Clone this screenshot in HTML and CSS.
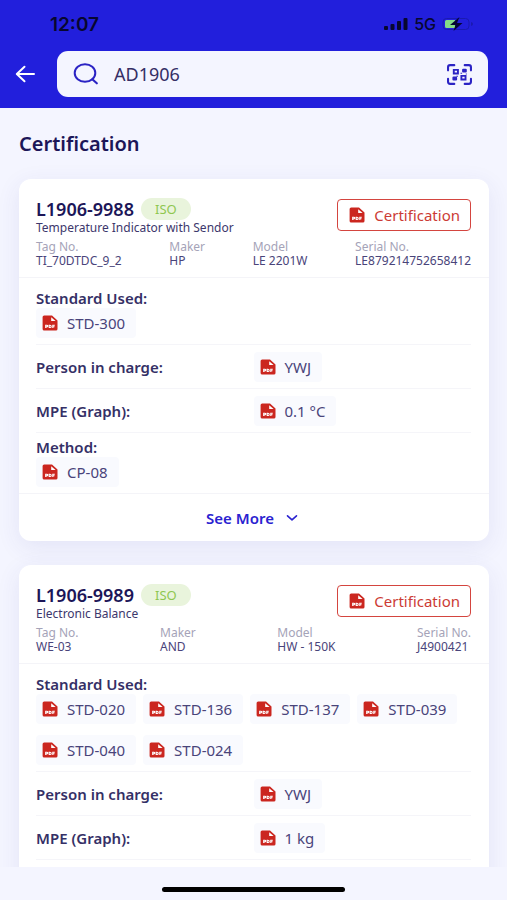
FILE: index.html
```html
<!DOCTYPE html>
<html lang="en">
<head>
<meta charset="utf-8">
<meta name="viewport" content="width=device-width, initial-scale=1">
<title>Certification</title>
<link rel="stylesheet" href="styles.css">
</head>
<body>
<svg class="sprite" aria-hidden="true">
  <symbol id="pdf" viewBox="0 0 16 16">
    <path fill="#cb261f" d="M2.2 0.4H10L15.5 5.6V14a1.6 1.6 0 0 1-1.6 1.6H2.2A1.6 1.6 0 0 1 .6 14V2A1.6 1.6 0 0 1 2.2.4z"/>
    <path fill="#fff" d="M9.2 2.2V6h4.4z"/>
    <path fill="none" stroke="#fff" stroke-width="1.1" d="M3.7 13v-2.7h1.1q1 0 1 .8t-1 .8H3.7M7.2 10.300v2.200h.7q1.300 0 1.300-1.100t-1.300-1.100zM10.800 13v-2.700h2M10.800 11.700h1.700"/>
  </symbol>
</svg>

<header class="top">
  <div class="status">
    <span class="time">12:07</span>
    <div class="signals">
      <svg class="bars" viewBox="0 0 24 12" aria-hidden="true"><rect x="0" y="8" width="4" height="4" rx="1"/><rect x="6.500" y="6" width="4" height="6" rx="1"/><rect x="13" y="3" width="4" height="9" rx="1"/><rect x="19.500" y="0" width="4" height="12" rx="1"/></svg>
      <span class="network">5G</span>
      <svg class="battery" viewBox="0 0 32 14" aria-hidden="true">
        <rect x="1" y="1.500" width="26" height="11" rx="3.500" fill="none" stroke="#1a1ab0"/>
        <path d="M29 5v4q2-.5 2-2t-2-2z" fill="#1a1ab0"/>
        <path d="M4.500 3H13v8H4.500A1.500 1.500 0 0 1 3 9.500v-5A1.500 1.500 0 0 1 4.500 3z" fill="#84dc86"/>
        <path d="M17.500 0 8 8h5.500L11.500 14 20.500 6H15z" fill="#050533"/>
      </svg>
    </div>
  </div>
  <div class="searchbar">
    <button class="back" type="button" aria-label="Back">
      <svg viewBox="0 0 20 18" aria-hidden="true"><path d="M19 9H2M9.500 1.800 1.800 9l7.700 7.200" fill="none" stroke="#fff" stroke-width="2" stroke-linecap="round" stroke-linejoin="round"/></svg>
    </button>
    <div class="field">
      <svg class="lens" viewBox="0 0 26 22" aria-hidden="true"><ellipse cx="12" cy="10" rx="10.300" ry="8.800" fill="none" stroke="#2b23c4" stroke-width="2"/><path d="m19.300 16.300 4.500 4" stroke="#2b23c4" stroke-width="2.200" stroke-linecap="round"/></svg>
      <input type="text" value="AD1906" aria-label="Search">
      <button class="scan" type="button" aria-label="Scan code">
        <svg viewBox="0 0 24 20" aria-hidden="true">
          <path d="M1 6V3q0-2 2-2h4M17 1h4q2 0 2 2v3M23 14v3q0 2-2 2h-4M7 19H3q-2 0-2-2v-3" fill="none" stroke="#2b23c4" stroke-width="2" stroke-linecap="round"/>
          <path d="M6.500 5.500h4v3.500h-4zM13.800 11.300h4v3.500h-4z" fill="none" stroke="#2b23c4" stroke-width="1.800"/>
          <rect x="14.500" y="4.500" width="4.500" height="3.500" rx="1" fill="#2b23c4"/><rect x="5.200" y="12" width="4.500" height="3.800" rx="1" fill="#2b23c4"/>
          <path d="M13 8.700h1.500M9 11.700h1.500M18 9.500h1" stroke="#2b23c4"/>
        </svg>
      </button>
    </div>
  </div>
</header>

<main class="content">
  <h1>Certification</h1>

  <article class="card">
    <div class="card-head">
      <div class="title-row">
        <div>
          <div class="name"><h2>L1906-9988</h2><span class="badge">ISO</span></div>
          <p class="subtitle">Temperature Indicator with Sendor</p>
        </div>
        <button class="cert" type="button"><svg class="pdf" aria-hidden="true"><use href="#pdf"/></svg>Certification</button>
      </div>
      <dl class="meta">
        <div><dt>Tag No.</dt><dd>TI_70DTDC_9_2</dd></div>
        <div><dt>Maker</dt><dd>HP</dd></div>
        <div><dt>Model</dt><dd>LE 2201W</dd></div>
        <div><dt>Serial No.</dt><dd>LE879214752658412</dd></div>
      </dl>
    </div>
    <div class="details">
      <section class="block first">
        <h3>Standard Used:</h3>
        <div class="chips"><a class="chip" href="#"><svg class="pdf" aria-hidden="true"><use href="#pdf"/></svg>STD-300</a></div>
      </section>
      <section class="row">
        <h3>Person in charge:</h3>
        <div class="chips"><a class="chip" href="#"><svg class="pdf" aria-hidden="true"><use href="#pdf"/></svg>YWJ</a></div>
      </section>
      <section class="row">
        <h3>MPE (Graph):</h3>
        <div class="chips"><a class="chip" href="#"><svg class="pdf" aria-hidden="true"><use href="#pdf"/></svg>0.1 °C</a></div>
      </section>
      <section class="block">
        <h3>Method:</h3>
        <div class="chips"><a class="chip" href="#"><svg class="pdf" aria-hidden="true"><use href="#pdf"/></svg>CP-08</a></div>
      </section>
    </div>
    <button class="more" type="button">See More
      <svg viewBox="0 0 12 8" aria-hidden="true"><path d="m1.500 1.800 4.500 4 4.500-4" fill="none" stroke="#2a22d0" stroke-width="1.600" stroke-linecap="round" stroke-linejoin="round"/></svg>
    </button>
  </article>

  <article class="card continued">
    <div class="card-head">
      <div class="title-row">
        <div>
          <div class="name"><h2>L1906-9989</h2><span class="badge">ISO</span></div>
          <p class="subtitle">Electronic Balance</p>
        </div>
        <button class="cert" type="button"><svg class="pdf" aria-hidden="true"><use href="#pdf"/></svg>Certification</button>
      </div>
      <dl class="meta">
        <div><dt>Tag No.</dt><dd>WE-03</dd></div>
        <div><dt>Maker</dt><dd>AND</dd></div>
        <div><dt>Model</dt><dd>HW - 150K</dd></div>
        <div><dt>Serial No.</dt><dd>J4900421</dd></div>
      </dl>
    </div>
    <div class="details">
      <section class="block first">
        <h3>Standard Used:</h3>
        <div class="chips">
          <a class="chip" href="#"><svg class="pdf" aria-hidden="true"><use href="#pdf"/></svg>STD-020</a>
          <a class="chip" href="#"><svg class="pdf" aria-hidden="true"><use href="#pdf"/></svg>STD-136</a>
          <a class="chip" href="#"><svg class="pdf" aria-hidden="true"><use href="#pdf"/></svg>STD-137</a>
          <a class="chip" href="#"><svg class="pdf" aria-hidden="true"><use href="#pdf"/></svg>STD-039</a>
          <a class="chip" href="#"><svg class="pdf" aria-hidden="true"><use href="#pdf"/></svg>STD-040</a>
          <a class="chip" href="#"><svg class="pdf" aria-hidden="true"><use href="#pdf"/></svg>STD-024</a>
        </div>
      </section>
      <section class="row">
        <h3>Person in charge:</h3>
        <div class="chips"><a class="chip" href="#"><svg class="pdf" aria-hidden="true"><use href="#pdf"/></svg>YWJ</a></div>
      </section>
      <section class="row">
        <h3>MPE (Graph):</h3>
        <div class="chips"><a class="chip" href="#"><svg class="pdf" aria-hidden="true"><use href="#pdf"/></svg>1 kg</a></div>
      </section>
    </div>
  </article>
</main>

<footer class="home"><span class="indicator"></span></footer>
</body>
</html>
```
FILE: styles.css
```css
* { box-sizing: border-box; }

body {
  margin: 0;
  height: 100vh;
  display: flex;
  flex-direction: column;
  overflow: hidden;
  background: #f4f5ff;
  color: #1c1658;
  font-family: "Noto Sans", "Open Sans", sans-serif;
}

h1, h2, h3, p, dl, dd { margin: 0; }
button { font: inherit; cursor: pointer; }
svg { display: block; flex: none; }
.sprite { position: absolute; width: 0; height: 0; }

.top {
  flex: none;
  padding: 14px 19px 11px 14px;
  background: #221fdc;
}
.status {
  display: flex;
  justify-content: space-between;
  align-items: center;
  height: 20px;
  margin: 0 14px 17px 36px;
  color: #07072f;
  font-family: Inter, sans-serif;
}
.time { font-size: 19px; font-weight: 600; }
.signals { display: flex; align-items: center; gap: 6px; }
.bars { width: 24px; height: 12px; fill: #07072f; }
.network { font-size: 16px; font-weight: 500; }
.battery { width: 32px; height: 14px; }

.searchbar { display: flex; align-items: center; gap: 21px; }
.back { padding: 0; border: 0; background: none; }
.back svg { width: 22px; height: 18px; }
.field {
  flex: 1;
  display: flex;
  align-items: center;
  gap: 15px;
  height: 46px;
  padding: 0 16px;
  border-radius: 11px;
  background: #f4f5ff;
}
.lens { width: 26px; height: 22px; }
.field input {
  flex: 1;
  min-width: 0;
  padding: 0;
  border: 0;
  outline: 0;
  background: none;
  color: #352e66;
  font: 400 18px "Noto Sans", sans-serif;
}
.scan { padding: 0; border: 0; background: none; }
.scan svg { width: 25px; height: 21px; }

.content {
  flex: 1;
  min-height: 0;
  overflow: hidden;
  padding: 22px 18px 0 19px;
}
h1 {
  margin-bottom: 21px;
  font-size: 20px;
  line-height: 28px;
  font-weight: 600;
}

.card {
  margin-bottom: 24px;
  border-radius: 12px;
  background: #fff;
  box-shadow: 0 6px 24px rgba(60, 50, 150, 0.09);
}
.card-head {
  padding: 18px 18px 9px 17px;
  border-bottom: 1px solid #f4f4f8;
}
.title-row {
  display: flex;
  justify-content: space-between;
  align-items: flex-start;
}
.name { display: flex; align-items: center; gap: 7px; height: 24px; }
h2 { font-size: 18px; line-height: 22px; font-weight: 600; }
.badge {
  padding: 0 14px;
  border-radius: 11px;
  background: #e9f4dc;
  color: #8fc750;
  font-size: 13px;
  line-height: 22px;
}
.subtitle { color: #3d376c; font-size: 12px; line-height: 14px; }
.cert {
  display: flex;
  align-items: center;
  gap: 9px;
  height: 32px;
  margin-top: 2px;
  padding: 0 10px 0 11px;
  border: 1px solid #d4453f;
  border-radius: 4px;
  background: #fff;
  color: #cc3b35;
  font-size: 15px;
}
.pdf { width: 16px; height: 16px; }

.meta { display: flex; justify-content: space-between; margin-top: 5px; }
.meta dt { color: #a5a3b8; font-size: 12px; line-height: 14px; }
.meta dd { color: #49447a; font-size: 12px; line-height: 14px; }

.details { padding: 0 18px 0 17px; }
h3 { color: #353066; font-size: 15px; line-height: 20px; font-weight: 600; }
.block { padding: 4px 0 6px; border-bottom: 1px solid #f5f5f9; }
.block.first { padding-top: 10px; }
.block:last-child { border-bottom: 0; }
.row {
  display: grid;
  grid-template-columns: 1fr 1fr;
  align-items: center;
  height: 44px;
  border-bottom: 1px solid #f5f5f9;
}
.chips { display: flex; flex-wrap: wrap; gap: 11px 7px; }
.chip {
  display: flex;
  align-items: center;
  gap: 9px;
  height: 30px;
  padding: 0 11px 0 6px;
  border-radius: 4px;
  background: #f9fafe;
  color: #49447a;
  font-size: 15px;
  text-decoration: none;
}

.more {
  display: flex;
  justify-content: center;
  align-items: center;
  gap: 12px;
  width: 100%;
  height: 48px;
  padding: 0 4px 0 0;
  border: 0;
  border-top: 1px solid #f4f4f8;
  background: none;
  color: #2a22d0;
  font-size: 15px;
  font-weight: 600;
}
.more svg { width: 12px; height: 8px; }

.card.continued { padding-bottom: 40px; }

.home {
  flex: none;
  display: flex;
  justify-content: center;
  height: 33px;
  padding-top: 20px;
}
.indicator { width: 36%; height: 5px; border-radius: 3px; background: #000; }
```
